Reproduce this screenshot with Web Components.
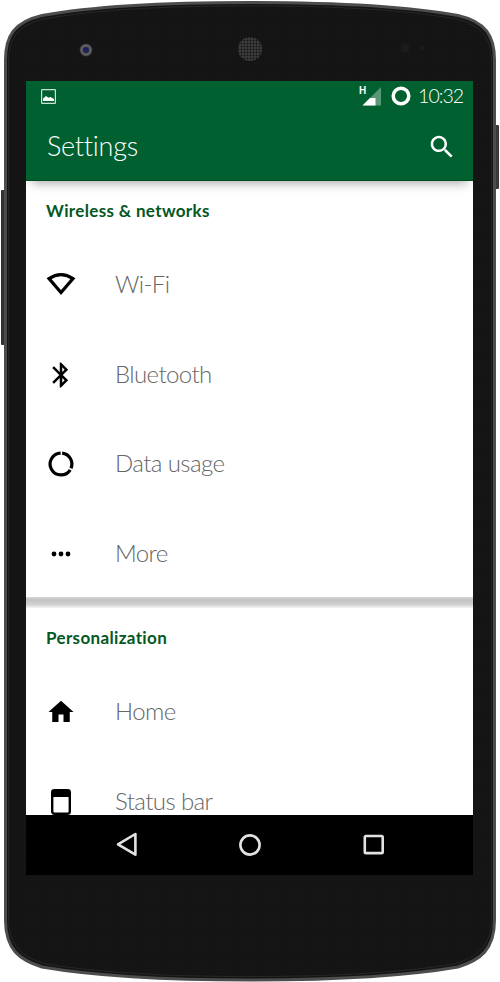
<!DOCTYPE html>
<html>
<head>
<meta charset="utf-8">
<title>Settings</title>
<style>
  html, body { margin: 0; background: #fff; }
</style>
</head>
<body>

<phone-frame>
  <status-bar></status-bar>
  <app-bar title="Settings"></app-bar>
  <settings-list>
    <settings-section title="Wireless &amp; networks">
      <settings-row label="Wi-Fi">
        <svg slot="icon" width="30" height="30" viewBox="0 0 30 30"><path d="M3 8.6Q15 .6 27 8.6L15 22.6Z" fill="none" stroke="#000" stroke-width="3.2"/></svg>
      </settings-row>
      <settings-row label="Bluetooth">
        <svg slot="icon" width="30" height="30" viewBox="0 0 24 24"><path d="M17.71 7.71L12 2h-1v7.59L6.41 5 5 6.41 10.59 12 5 17.59 6.41 19 11 14.41V22h1l5.71-5.71-4.3-4.29 4.3-4.29zM13 5.83l1.88 1.88L13 9.59V5.83zm1.88 10.46L13 18.17v-3.76l1.88 1.88z"/></svg>
      </settings-row>
      <settings-row label="Data usage">
        <svg slot="icon" width="30" height="30" viewBox="0 0 30 30"><path d="M16.14 4.16A10.9 10.9 0 0 1 25.03 19.26M24.24 20.78A10.9 10.9 0 1 1 14.62 4.11" fill="none" stroke="#000" stroke-width="3.2"/></svg>
      </settings-row>
      <settings-row label="More">
        <svg slot="icon" width="30" height="30" viewBox="0 0 30 30"><circle cx="8" cy="15" r="2.4"/><circle cx="15" cy="15" r="2.4"/><circle cx="22" cy="15" r="2.4"/></svg>
      </settings-row>
    </settings-section>
    <settings-section title="Personalization" divided>
      <settings-row label="Home">
        <svg slot="icon" width="30" height="30" viewBox="0 0 24 24"><path d="M10 20v-6h4v6h5v-8h3L12 3 2 12h3v8z"/></svg>
      </settings-row>
      <settings-row label="Status bar">
        <svg slot="icon" width="30" height="30" viewBox="0 0 30 30"><rect x="6.2" y="3.2" width="17.6" height="23.6" rx="2.2" fill="none" stroke="#000" stroke-width="2.4"/><rect x="6" y="3" width="18" height="7"/></svg>
      </settings-row>
    </settings-section>
  </settings-list>
  <nav-bar></nav-bar>
</phone-frame>

<script>
const FONT = `"Lato", "Liberation Sans", sans-serif`;

// Phone shell: the drawn body sits behind, the screen flows inside the padding
class PhoneFrame extends HTMLElement {
  constructor() {
    super();
    const body = 'M5.5 60C5.5 36 14 22 42 15.5 100 5 180 2.5 250 2.5S400 5 458 15.5C486 22 494.5 36 494.5 60V920C494.5 950 480 960 458 967 400 977 320 980 250 980S100 977 42 967C20 960 5.5 950 5.5 920Z';
    this.attachShadow({mode: 'open'}).innerHTML = `
      <style>
        :host {
          display: block;
          position: relative;
          box-sizing: border-box;
          width: 500px;
          height: 982px;
          padding: 81px 27px 107px 26px;
          font-family: ${FONT};
        }
        svg.shell { position: absolute; left: 0; top: 0; }
        .screen {
          position: relative;
          display: flex;
          flex-direction: column;
          height: 100%;
          overflow: hidden;
          background: #fff;
        }
      </style>
      <svg class="shell" width="500" height="982" viewBox="0 0 500 982">
        <defs>
          <pattern id="grain" width="3" height="3" patternUnits="userSpaceOnUse">
            <rect width="3" height="3" fill="#141414"/>
            <rect width="1" height="1" fill="#191919"/>
          </pattern>
          <radialGradient id="lens">
            <stop offset="0" stop-color="#2222b0"/>
            <stop offset=".32" stop-color="#1c1c40"/>
            <stop offset=".7" stop-color="#6a6a6a"/>
            <stop offset="1" stop-color="#2a2a2a"/>
          </radialGradient>
          <pattern id="mesh" width="3" height="3" patternUnits="userSpaceOnUse">
            <rect width="3" height="3" fill="#3c3c3c"/>
            <circle cx="1.5" cy="1.5" r=".95" fill="#141414"/>
          </pattern>
        </defs>
        <rect x="1" y="190" width="8" height="155" rx="1" fill="#333"/>
        <rect x="491" y="125" width="8" height="64" rx="1" fill="#3a3a3a"/>
        <path d="${body}" fill="url(#grain)" stroke="#4d4d4d" stroke-width="3"/>
        <path d="${body}" fill="none" stroke="#262626" stroke-width="1" transform="translate(250 491) scale(.988 .993) translate(-250 -491)"/>
        <circle cx="86" cy="50" r="6.5" fill="url(#lens)"/>
        <circle cx="250" cy="49" r="12" fill="url(#mesh)"/>
        <circle cx="405" cy="48" r="4.5" fill="#1e1a1a"/>
        <circle cx="422" cy="48" r="2.5" fill="#1e1a1a"/>
      </svg>
      <div class="screen"><slot></slot></div>
    `;
  }
}

class StatusBar extends HTMLElement {
  constructor() {
    super();
    this.attachShadow({mode: 'open'}).innerHTML = `
      <style>
        :host {
          display: flex;
          align-items: center;
          box-sizing: border-box;
          height: 30px;
          padding: 0 10px 0 15px;
          background: #00602f;
          color: #fff;
        }
        .right { margin-left: auto; display: flex; align-items: center; }
        .h { font: 700 10px/8px "Liberation Sans", sans-serif; width: 3px; align-self: flex-start; margin-top: 6px; }
        .time { margin-left: 7px; font-size: 19.5px; font-weight: 300; letter-spacing: -1px; line-height: 30px; }
        svg { display: block; }
      </style>
      <svg width="15" height="15" viewBox="0 0 15 15">
        <rect x=".6" y=".6" width="13.8" height="13.8" rx=".6" fill="none" stroke="#cfe0d6" stroke-width="1.2"/>
        <path d="M2 12V9.5L5 7l2.5 1.8L9.5 8 13 10v2Z" fill="#fff"/>
      </svg>
      <div class="right">
        <span class="h">H</span>
        <svg width="20" height="20" viewBox="0 0 20 20">
          <path d="M0.5 19.5 19 1V19.5Z" fill="#fff" fill-opacity=".35"/>
          <path d="M0.5 19.5 8 12 13.5 12V19.5Z" fill="#fff"/>
        </svg>
        <svg style="margin-left:9px" width="20" height="20" viewBox="0 0 20 20">
          <circle cx="10" cy="10" r="7.8" fill="none" stroke="#fff" stroke-width="3.5"/>
        </svg>
        <span class="time">10:32</span>
      </div>
    `;
  }
}

class AppBar extends HTMLElement {
  constructor() {
    super();
    this.attachShadow({mode: 'open'}).innerHTML = `
      <style>
        :host {
          position: relative;
          z-index: 2;
          display: flex;
          align-items: center;
          justify-content: space-between;
          box-sizing: border-box;
          height: 70px;
          padding: 0 16px 0 21px;
          background: #00602f;
          border-bottom: 1px solid #004d22;
          color: #fff;
          box-shadow: 0 8px 10px -6px rgba(0,0,0,.35);
        }
        .title { font-size: 27px; font-weight: 300; letter-spacing: -.25px; }
        svg { display: block; fill: #fff; margin-top: 2px; }
      </style>
      <span class="title">${this.getAttribute('title')}</span>
      <svg width="30" height="30" viewBox="0 0 24 24"><path d="M15.5 14h-.79l-.28-.27C15.41 12.59 16 11.11 16 9.5 16 5.91 13.09 3 9.5 3S3 5.91 3 9.5 5.91 16 9.5 16c1.61 0 3.09-.59 4.23-1.57l.27.28v.79l5 4.99L20.49 19l-4.99-5zm-6 0C7.01 14 5 11.99 5 9.5S7.01 5 9.5 5 14 7.01 14 9.5 11.99 14 9.5 14z"/></svg>
    `;
  }
}

class SettingsList extends HTMLElement {
  constructor() {
    super();
    this.attachShadow({mode: 'open'}).innerHTML = `
      <style>
        :host { display: block; flex: 1; min-height: 0; overflow: hidden; background: #fff; }
      </style>
      <slot></slot>
    `;
  }
}

class SettingsSection extends HTMLElement {
  constructor() {
    super();
    this.attachShadow({mode: 'open'}).innerHTML = `
      <style>
        :host { display: block; }
        :host([divided]) .band { display: block; }
        .band {
          display: none;
          height: 11px;
          margin-top: -1px;
          background: linear-gradient(#d8d8d8, #c2c2c2 25%, #d2d2d2 70%, #f6f6f6);
        }
        .title {
          box-sizing: border-box;
          height: 59.25px;
          padding-left: 20px;
          line-height: 59.25px;
          font-size: 17px;
          font-weight: 700;
          letter-spacing: .35px;
          color: #04571f;
        }
      </style>
      <div class="band"></div>
      <div class="title">${this.getAttribute('title')}</div>
      <slot></slot>
    `;
  }
}

class SettingsRow extends HTMLElement {
  constructor() {
    super();
    this.attachShadow({mode: 'open'}).innerHTML = `
      <style>
        :host {
          display: grid;
          grid-template-columns: 30px 1fr;
          column-gap: 39px;
          align-items: center;
          height: 89.5px;
          padding-left: 20px;
        }
        .icon { display: flex; }
        .label {
          font-size: 24px;
          line-height: 24px;
          font-weight: 300;
          letter-spacing: -.6px;
          color: #666;
          margin-bottom: 2px;
        }
      </style>
      <div class="icon"><slot name="icon"></slot></div>
      <div class="label">${this.getAttribute('label')}</div>
    `;
  }
}

class NavBar extends HTMLElement {
  constructor() {
    super();
    this.attachShadow({mode: 'open'}).innerHTML = `
      <style>
        :host {
          position: relative;
          z-index: 2;
          display: grid;
          grid-template-columns: repeat(3, 30px);
          column-gap: 94px;
          justify-content: center;
          align-items: center;
          height: 60px;
          flex: none;
          background: #000;
        }
        svg { display: block; fill: none; stroke: #e2e2e2; stroke-width: 2.6; stroke-linejoin: round; }
      </style>
      <svg width="30" height="30" viewBox="0 0 30 30"><path d="M24.4 4V24.7L7 14.3Z"/></svg>
      <svg width="30" height="30" viewBox="0 0 30 30"><circle cx="15" cy="15" r="9.6"/></svg>
      <svg width="30" height="30" viewBox="0 0 30 30"><rect x="5.8" y="6" width="17.9" height="17.1" rx="1.2"/></svg>
    `;
  }
}

customElements.define('phone-frame', PhoneFrame);
customElements.define('status-bar', StatusBar);
customElements.define('app-bar', AppBar);
customElements.define('settings-list', SettingsList);
customElements.define('settings-section', SettingsSection);
customElements.define('settings-row', SettingsRow);
customElements.define('nav-bar', NavBar);
</script>
</body>
</html>
